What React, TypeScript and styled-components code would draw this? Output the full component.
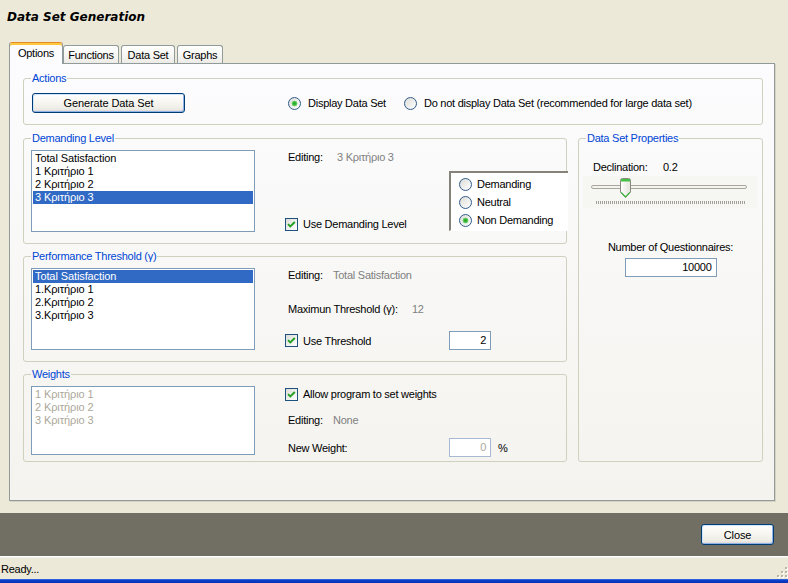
import React from "react";
import styled, { createGlobalStyle, css } from "styled-components";

const Global = createGlobalStyle`
  html, body { margin: 0; padding: 0; background: #ECE9D8; }
  body { font-family: "Liberation Sans", Arial, sans-serif; font-size: 11px; letter-spacing: -0.25px; color: #000; }
  #root { width: 788px; height: 583px; overflow: hidden; }
  * { box-sizing: border-box; }
`;

const Window = styled.div`
  width: 788px;
  height: 583px;
  display: flex;
  flex-direction: column;
  background: #ECE9D8;
`;

const Header = styled.div`
  height: 42px;
  padding: 10px 0 0 7px;
  flex: none;
`;

const Title = styled.h1`
  margin: 0;
  font-family: "DejaVu Sans", Verdana, sans-serif;
  font-weight: bold;
  font-style: italic;
  font-size: 12px;
  line-height: 15px;
  letter-spacing: 0;
  color: #000;
`;

const TabStrip = styled.div`
  height: 21px;
  flex: none;
  display: flex;
  align-items: flex-end;
  gap: 2px;
  padding-left: 11px;
  position: relative;
  z-index: 2;
`;

const Tab = styled.div<{ $w: number; $active?: boolean }>`
  flex: none;
  width: ${(p) => p.$w}px;
  height: 18px;
  display: flex;
  align-items: center;
  justify-content: center;
  border: 1px solid #919B9C;
  border-bottom: none;
  border-radius: 3px 3px 0 0;
  background: linear-gradient(#FFFFFF, #F7F7F4 50%, #ECEBE6);
  white-space: nowrap;
  ${(p) =>
    p.$active &&
    css`
      width: ${p.$w + 4}px;
      height: 22px;
      margin: 0 -2px -1px;
      padding-bottom: 2px;
      border-top: 1px solid #E68B2C;
      box-shadow: inset 0 2px 0 #FFC83C;
      background: #FCFCFE;
    `}
`;

const Panel = styled.div`
  flex: none;
  position: relative;
  z-index: 1;
  margin-left: 9px;
  margin-bottom: 12px;
  width: 766px;
  height: 438px;
  border: 1px solid #919B9C;
  box-shadow: 1px 1px 0 #D6D3C3;
  background: linear-gradient(#FCFCFE, #F4F3EE);
  padding: 8px 11px 0 13px;
  display: flex;
  flex-direction: column;
  gap: 7px;
`;

const Group = styled.fieldset<{ $h: number }>`
  margin: 0;
  padding: 0;
  min-width: 0;
  height: ${(p) => p.$h}px;
  border: 1px solid #D0D0BF;
  border-radius: 3px;
`;

const Legend = styled.legend`
  margin-left: 7px;
  padding: 0 1px;
  color: #0046D5;
  font-size: 11px;
  line-height: 13px;
`;

const ActionsBody = styled.div`
  display: flex;
  align-items: center;
  padding: 8px 0 0 8px;
`;

const XPButton = styled.button<{ $w: number; $h: number }>`
  width: ${(p) => p.$w}px;
  height: ${(p) => p.$h}px;
  flex: none;
  padding: 0;
  font-family: "Liberation Sans", Arial, sans-serif;
  font-size: 11px;
  letter-spacing: -0.1px;
  color: #000;
  border: 1px solid #003C74;
  border-radius: 3px;
  background: linear-gradient(#FFFFFF, #F7F6F1 45%, #ECEBE6 85%, #D6D0C5);
  box-shadow: inset 1px 1px 0 #CEE7FF, inset -1px -1px 0 #8FB2E8;
`;

const RadioOption = styled.label<{ $ml?: number }>`
  display: flex;
  align-items: center;
  gap: 7px;
  height: 18px;
  margin-left: ${(p) => p.$ml ?? 0}px;
  white-space: nowrap;
`;

const RadioDot = styled.span<{ $on?: boolean }>`
  width: 13px;
  height: 13px;
  flex: none;
  border-radius: 50%;
  border: 1px solid #2F5A8A;
  background: ${(p) =>
      p.$on
        ? "radial-gradient(circle at 50% 50%, #21A121 0, #3DBB3D 1.6px, #8EDA8E 2.8px, transparent 3.2px), "
        : ""}
    linear-gradient(135deg, #DCDCD7, #FFFFFF);
`;

const Columns = styled.div`
  display: grid;
  grid-template-columns: 544px 185px;
  column-gap: 11px;
`;

const LeftStack = styled.div`
  display: flex;
  flex-direction: column;
  gap: 6px;
`;

const GroupBody = styled.div`
  display: flex;
  align-items: flex-start;
  gap: 30px;
  padding: 3px 0 0 7px;
`;

const ListBox = styled.div<{ $h: number }>`
  flex: none;
  width: 224px;
  height: ${(p) => p.$h}px;
  margin-top: 2px;
  border: 1px solid #7F9DB9;
  background: #fff;
  padding-top: 1px;
`;

const ListItem = styled.div<{ $sel?: boolean; $dis?: boolean }>`
  height: 13px;
  line-height: 13px;
  margin: 0 1px;
  padding-left: 2px;
  white-space: nowrap;
  letter-spacing: -0.1px;
  color: ${(p) => (p.$sel ? "#FFFFFF" : p.$dis ? "#ACA899" : "#000")};
  background: ${(p) => (p.$sel ? "#316AC5" : "transparent")};
`;

const Pane = styled.div`
  flex: 1;
  display: flex;
  flex-direction: column;
`;

const DemandPane = styled.div`
  display: grid;
  grid-template-columns: 164px 119px;
  align-items: start;
`;

const InfoRow = styled.div<{ $mt?: number }>`
  height: 18px;
  display: flex;
  align-items: center;
  padding-left: 3px;
  margin-top: ${(p) => p.$mt ?? 0}px;
  white-space: nowrap;
`;

const Lbl = styled.span<{ $w?: number }>`
  width: ${(p) => (p.$w ? `${p.$w}px` : "auto")};
  flex: none;
`;

const Val = styled.span<{ $ml?: number }>`
  margin-left: ${(p) => p.$ml ?? 0}px;
  color: #7F7F7F;
`;

const CheckLabel = styled.label<{ $mt?: number }>`
  height: 18px;
  display: flex;
  align-items: center;
  gap: 5px;
  margin-top: ${(p) => p.$mt ?? 0}px;
  white-space: nowrap;
`;

const CheckBox = styled.span`
  width: 13px;
  height: 13px;
  flex: none;
  border: 1px solid #1C5180;
  background: linear-gradient(135deg, #DCDCD7, #FFFFFF);
  display: flex;
  align-items: center;
  justify-content: center;
`;

const ControlRow = styled.div<{ $mt?: number }>`
  display: grid;
  grid-template-columns: 164px 42px auto;
  align-items: center;
  height: 19px;
  margin-top: ${(p) => p.$mt ?? 0}px;
  white-space: nowrap;
`;

const RowLbl = styled.span`
  padding-left: 3px;
`;

const NumBox = styled.div<{ $w: number; $dis?: boolean }>`
  width: ${(p) => p.$w}px;
  height: 19px;
  border: 1px solid ${(p) => (p.$dis ? "#A7BAD2" : "#7F9DB9")};
  background: #fff;
  color: ${(p) => (p.$dis ? "#ACA899" : "#000")};
  text-align: right;
  padding-right: 4px;
  line-height: 17px;
`;

const Percent = styled.span`
  padding-left: 7px;
`;

const OptionBox = styled.div`
  margin-top: 23px;
  height: 60px;
  border-style: solid;
  border-width: 2px 0 1px 2px;
  border-color: #85837A transparent #FFFFFF #85837A;
  background: #fff;
  padding: 2px 0 0 8px;
  position: relative;
  z-index: 1;
`;

const BoxRadio = styled(RadioOption)`
  gap: 5px;
`;

const DspBody = styled.div`
  display: flex;
  flex-direction: column;
  padding-top: 13px;
`;

const DeclRow = styled.div`
  height: 18px;
  display: flex;
  align-items: center;
  padding-left: 14px;
`;

const SliderWell = styled.div`
  width: 174px;
  height: 32px;
  margin-left: 4px;
  background: #F6F6F3;
`;

const CenterLabel = styled.div`
  height: 18px;
  margin-top: 30px;
  display: flex;
  align-items: center;
  justify-content: center;
`;

const CenterBox = styled.div`
  display: flex;
  justify-content: center;
  margin-top: 2px;
`;

const BottomBar = styled.div`
  height: 43px;
  flex: none;
  background: #716F64;
  display: flex;
  align-items: center;
  justify-content: flex-end;
  padding-right: 14px;
`;

const StatusBar = styled.div`
  height: 23px;
  flex: none;
  border-top: 1px solid #FFFFFF;
  box-shadow: inset 0 1px 0 #F4F2E8;
  background: #ECE9D8;
  display: flex;
  align-items: center;
  justify-content: space-between;
  padding-left: 1px;
  padding-top: 1px;
`;

const Grip = styled.span`
  align-self: flex-end;
  margin-bottom: 1px;
  display: flex;
`;

const TaskEdge = styled.div`
  height: 4px;
  flex: none;
  background: linear-gradient(#3A6EE4, #0B3CC8 40%, #0731B0);
`;

function Check() {
  return (
    <CheckBox>
      <svg width="11" height="11" viewBox="0 0 11 11">
        <polyline points="2,5.2 4.3,7.5 8.8,3" fill="none" stroke="#21A121" strokeWidth="1.9" />
      </svg>
    </CheckBox>
  );
}

function Slider() {
  const ticks = Array.from({ length: 75 }, (_, i) => 13 + i * 2);
  return (
    <svg width="174" height="32" viewBox="0 0 174 32">
      <defs>
        <linearGradient id="thumbFill" x1="0" y1="0" x2="1" y2="0">
          <stop offset="0" stopColor="#FFFFFF" />
          <stop offset="1" stopColor="#E4E3DC" />
        </linearGradient>
      </defs>
      <rect x="8.5" y="9.5" width="155" height="3" rx="1.5" fill="#F4F3EE" stroke="#A9A79D" />
      {ticks.map((x) => (
        <rect key={x} x={x} y={25} width={1} height={3} fill="#A3A196" />
      ))}
      <path
        d="M37.5 4.5 Q37.5 2.5 39.5 2.5 H45.5 Q47.5 2.5 47.5 4.5 V16 L42.5 21.5 L37.5 16 Z"
        fill="url(#thumbFill)"
        stroke="#8A887E"
      />
      <rect x="38" y="3" width="9" height="2.5" fill="#45C245" />
      <path d="M38.1 16.3 L42.5 20.9 L46.9 16.3" fill="none" stroke="#3CB43C" strokeWidth="1.2" />
    </svg>
  );
}

function GripIcon() {
  const dots: [number, number][] = [
    [9, 1],
    [9, 5],
    [5, 5],
    [9, 9],
    [5, 9],
    [1, 9],
  ];
  return (
    <svg width="12" height="12" viewBox="0 0 12 12">
      {dots.map(([x, y]) => (
        <g key={`${x}-${y}`}>
          <rect x={x + 1} y={y + 1} width="2" height="2" fill="#FFFFFF" />
          <rect x={x} y={y} width="2" height="2" fill="#B9B6A6" />
        </g>
      ))}
    </svg>
  );
}

export default function App() {
  return (
    <>
      <Global />
      <Window>
        <Header>
          <Title>Data Set Generation</Title>
        </Header>
        <TabStrip>
          <Tab $w={50} $active>
            Options
          </Tab>
          <Tab $w={56}>Functions</Tab>
          <Tab $w={54}>Data Set</Tab>
          <Tab $w={46}>Graphs</Tab>
        </TabStrip>
        <Panel>
          <Group $h={53}>
            <Legend>Actions</Legend>
            <ActionsBody>
              <XPButton $w={153} $h={20}>Generate Data Set</XPButton>
              <RadioOption $ml={103}>
                <RadioDot $on />
                Display Data Set
              </RadioOption>
              <RadioOption $ml={18}>
                <RadioDot />
                Do not display Data Set (recommended for large data set)
              </RadioOption>
            </ActionsBody>
          </Group>
          <Columns>
            <LeftStack>
              <Group $h={112}>
                <Legend>Demanding Level</Legend>
                <GroupBody>
                  <ListBox $h={82}>
                    <ListItem>Total Satisfaction</ListItem>
                    <ListItem>1 Κριτήριο 1</ListItem>
                    <ListItem>2 Κριτήριο 2</ListItem>
                    <ListItem $sel>3 Κριτήριο 3</ListItem>
                  </ListBox>
                  <DemandPane>
                    <Pane>
                      <InfoRow>
                        <Lbl $w={45}>Editing:</Lbl>
                        <Val $ml={4}>3 Κριτήριο 3</Val>
                      </InfoRow>
                      <CheckLabel $mt={49}>
                        <Check />
                        Use Demanding Level
                      </CheckLabel>
                    </Pane>
                    <OptionBox>
                      <BoxRadio>
                        <RadioDot />
                        Demanding
                      </BoxRadio>
                      <BoxRadio>
                        <RadioDot />
                        Neutral
                      </BoxRadio>
                      <BoxRadio>
                        <RadioDot $on />
                        Non Demanding
                      </BoxRadio>
                    </OptionBox>
                  </DemandPane>
                </GroupBody>
              </Group>
              <Group $h={112}>
                <Legend>Performance Threshold (γ)</Legend>
                <GroupBody>
                  <ListBox $h={82}>
                    <ListItem $sel>Total Satisfaction</ListItem>
                    <ListItem>1.Κριτήριο 1</ListItem>
                    <ListItem>2.Κριτήριο 2</ListItem>
                    <ListItem>3.Κριτήριο 3</ListItem>
                  </ListBox>
                  <Pane>
                    <InfoRow>
                      <Lbl $w={45}>Editing:</Lbl>
                      <Val>Total Satisfaction</Val>
                    </InfoRow>
                    <InfoRow $mt={16}>
                      <Lbl $w={124}>Maximun Threshold (γ):</Lbl>
                      <Val>12</Val>
                    </InfoRow>
                    <ControlRow $mt={13}>
                      <CheckLabel>
                        <Check />
                        Use Threshold
                      </CheckLabel>
                      <NumBox $w={42}>2</NumBox>
                    </ControlRow>
                  </Pane>
                </GroupBody>
              </Group>
              <Group $h={94}>
                <Legend>Weights</Legend>
                <GroupBody>
                  <ListBox $h={69}>
                    <ListItem $dis>1 Κριτήριο 1</ListItem>
                    <ListItem $dis>2 Κριτήριο 2</ListItem>
                    <ListItem $dis>3 Κριτήριο 3</ListItem>
                  </ListBox>
                  <Pane>
                    <CheckLabel $mt={1}>
                      <Check />
                      Allow program to set weights
                    </CheckLabel>
                    <InfoRow $mt={8}>
                      <Lbl $w={45}>Editing:</Lbl>
                      <Val>None</Val>
                    </InfoRow>
                    <ControlRow $mt={9}>
                      <RowLbl>New Weight:</RowLbl>
                      <NumBox $w={42} $dis>
                        0
                      </NumBox>
                      <Percent>%</Percent>
                    </ControlRow>
                  </Pane>
                </GroupBody>
              </Group>
            </LeftStack>
            <Group $h={330}>
              <Legend>Data Set Properties</Legend>
              <DspBody>
                <DeclRow>
                  <Lbl $w={70}>Declination:</Lbl>
                  <span>0.2</span>
                </DeclRow>
                <SliderWell>
                  <Slider />
                </SliderWell>
                <CenterLabel>Number of Questionnaires:</CenterLabel>
                <CenterBox>
                  <NumBox $w={92}>10000</NumBox>
                </CenterBox>
              </DspBody>
            </Group>
          </Columns>
        </Panel>
        <BottomBar>
          <XPButton $w={73} $h={21}>Close</XPButton>
        </BottomBar>
        <StatusBar>
          <span>Ready...</span>
          <Grip>
            <GripIcon />
          </Grip>
        </StatusBar>
        <TaskEdge />
      </Window>
    </>
  );
}
